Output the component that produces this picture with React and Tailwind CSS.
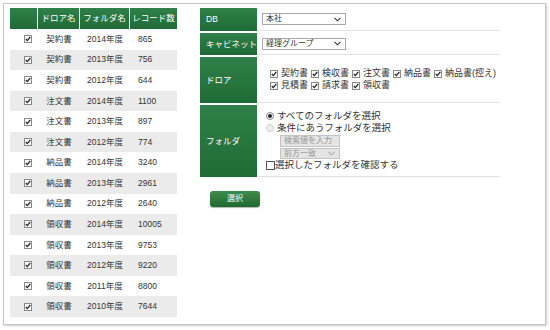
import React from 'react'

const rows = [
  ['契約書', '2014年度', '865'],
  ['契約書', '2013年度', '756'],
  ['契約書', '2012年度', '644'],
  ['注文書', '2014年度', '1100'],
  ['注文書', '2013年度', '897'],
  ['注文書', '2012年度', '774'],
  ['納品書', '2014年度', '3240'],
  ['納品書', '2013年度', '2961'],
  ['納品書', '2012年度', '2640'],
  ['領収書', '2014年度', '10005'],
  ['領収書', '2013年度', '9753'],
  ['領収書', '2012年度', '9220'],
  ['領収書', '2011年度', '8800'],
  ['領収書', '2010年度', '7644'],
]

const drawers1 = ['契約書', '検収書', '注文書', '納品書', '納品書(控え)']
const drawers2 = ['見積書', '請求書', '領収書']

function Check({ checked = true }) {
  return (
    <svg width="8" height="8" viewBox="0 0 8 8" className="shrink-0">
      <rect x="0.5" y="0.5" width="7" height="7" fill="#fafafa" stroke="#8a8a8a" />
      {checked && <polyline points="1.8,4 3.3,5.6 6.3,2" fill="none" stroke="#222" strokeWidth="1.2" />}
    </svg>
  )
}

function Chevron({ color = '#333' }) {
  return (
    <svg width="7" height="5" viewBox="0 0 7 5">
      <polyline points="0.5,0.8 3.5,3.8 6.5,0.8" fill="none" stroke={color} strokeWidth="1.1" />
    </svg>
  )
}

function Select({ value, disabled }) {
  return (
    <div
      className={
        'flex items-center justify-between w-[84px] h-[12px] border pl-[3px] pr-[4px] text-[8px] leading-none ' +
        (disabled ? 'bg-[#e4e4e4] border-[#c4c4c4] text-[#999]' : 'bg-white border-[#a8a8a8] text-[#333]')
      }
    >
      <span>{value}</span>
      <Chevron color={disabled ? '#aaa' : '#333'} />
    </div>
  )
}

function Label({ children, h }) {
  return (
    <div className={`w-[57px] ${h} flex items-center pl-[6px] text-white text-[8.5px] bg-linear-to-b from-[#2f8049] to-[#1f6b36]`}>
      {children}
    </div>
  )
}

export default function App() {
  return (
    <div className="w-[550px] h-[330px] bg-white p-[3px] font-['Liberation_Sans','Noto_Sans_CJK_JP',sans-serif]">
      <div className="w-[543px] h-[322px] border border-[#c6c6c6] shadow-[1px_1px_2px_rgba(0,0,0,0.2)] flex pl-[6px] pt-[4px]">
        {/* 左: テーブル */}
        <div className="w-[167px] flex flex-col">
          <div className="flex h-[21px] text-white text-[8.5px] bg-linear-to-b from-[#2f8049] to-[#1f6b36]">
            <div className="w-[28px] border-r border-white" />
            <div className="w-[42px] border-r border-white flex items-center justify-center">ドロア名</div>
            <div className="w-[50px] border-r border-white flex items-center justify-center">フォルダ名</div>
            <div className="w-[47px] flex items-center justify-center">レコード数</div>
          </div>
          {rows.map((r, i) => (
            <div key={i} className={`flex h-[20.57px] items-center text-[8.5px] text-[#333] ${i % 2 ? 'bg-[#ebebeb]' : 'bg-white'}`}>
              <div className="w-[28px] pl-[14px] flex items-center"><Check /></div>
              <div className="w-[42px] text-center">{r[0]}</div>
              <div className="w-[50px] text-center">{r[1]}</div>
              <div className="w-[47px] pl-[8px]">{r[2]}</div>
            </div>
          ))}
        </div>

        {/* 右: フォーム */}
        <div className="ml-[23px] flex flex-col">
          <div className="w-[300px] flex flex-col gap-[2px]">
            <div className="flex">
              <Label h="h-[23px]">DB</Label>
              <div className="flex-1 ml-[1px] pl-[4px] flex items-center border-b border-[#e2e2e2]">
                <Select value="本社" />
              </div>
            </div>
            <div className="flex">
              <Label h="h-[22px]">キャビネット</Label>
              <div className="flex-1 ml-[1px] pl-[4px] flex items-center border-b border-[#e2e2e2]">
                <Select value="経理グループ" />
              </div>
            </div>
            <div className="flex">
              <Label h="h-[46px]">ドロア</Label>
              <div className="flex-1 ml-[1px] pl-[12px] flex flex-col justify-center gap-[1px] border-b border-[#e2e2e2] text-[9px] text-[#333] leading-[11px]">
                <div className="flex items-center gap-[3px]">
                  {drawers1.map(d => (
                    <span key={d} className="flex items-center gap-[3px] whitespace-nowrap"><Check />{d}</span>
                  ))}
                </div>
                <div className="flex items-center gap-[3px]">
                  {drawers2.map(d => (
                    <span key={d} className="flex items-center gap-[3px] whitespace-nowrap"><Check />{d}</span>
                  ))}
                </div>
              </div>
            </div>
            <div className="flex">
              <Label h="h-[72px]">フォルダ</Label>
              <div className="flex-1 ml-[1px] pl-[8px] flex flex-col justify-center border-b border-[#e2e2e2] text-[9.5px] text-[#333] leading-[12px]">
                <div className="flex items-center gap-[3px]">
                  <span className="w-[8px] h-[8px] rounded-full border border-[#888] bg-white flex items-center justify-center">
                    <span className="w-[4px] h-[4px] rounded-full bg-[#222]" />
                  </span>
                  すべてのフォルダを選択
                </div>
                <div className="flex items-center gap-[3px]">
                  <span className="w-[8px] h-[8px] rounded-full border border-[#d4d4d4] bg-[#eee]" />
                  条件にあうフォルダを選択
                </div>
                <div className="pl-[14px] mt-[1px] flex flex-col gap-[1px]">
                  <div className="w-[60px] h-[12px] border border-[#c4c4c4] bg-[#e4e4e4] text-[#999] text-[8px] leading-[10px] pl-[3px]">検索値を入力</div>
                  <div className="w-[60px]"><SelectSmall /></div>
                </div>
                <div className="flex items-center">
                  <svg width="9" height="9" viewBox="0 0 9 9" className="shrink-0">
                    <rect x="0.5" y="0.5" width="8" height="8" fill="white" stroke="#555" />
                  </svg>
                  選択したフォルダを確認する
                </div>
              </div>
            </div>
          </div>
          <div className="mt-[14px] ml-[10px] w-[50px] h-[16px] rounded-[3px] bg-linear-to-b from-[#3f8c4c] to-[#1f692d] text-white text-[8px] flex items-center justify-center shadow-[0_1px_1px_rgba(0,0,0,0.3)]">
            選択
          </div>
        </div>
      </div>
    </div>
  )
}

function SelectSmall() {
  return (
    <div className="flex items-center justify-between w-[60px] h-[11px] border border-[#c4c4c4] bg-[#e4e4e4] pl-[3px] pr-[4px] text-[8px] leading-none text-[#999]">
      <span>前方一致</span>
      <Chevron color="#aaa" />
    </div>
  )
}
